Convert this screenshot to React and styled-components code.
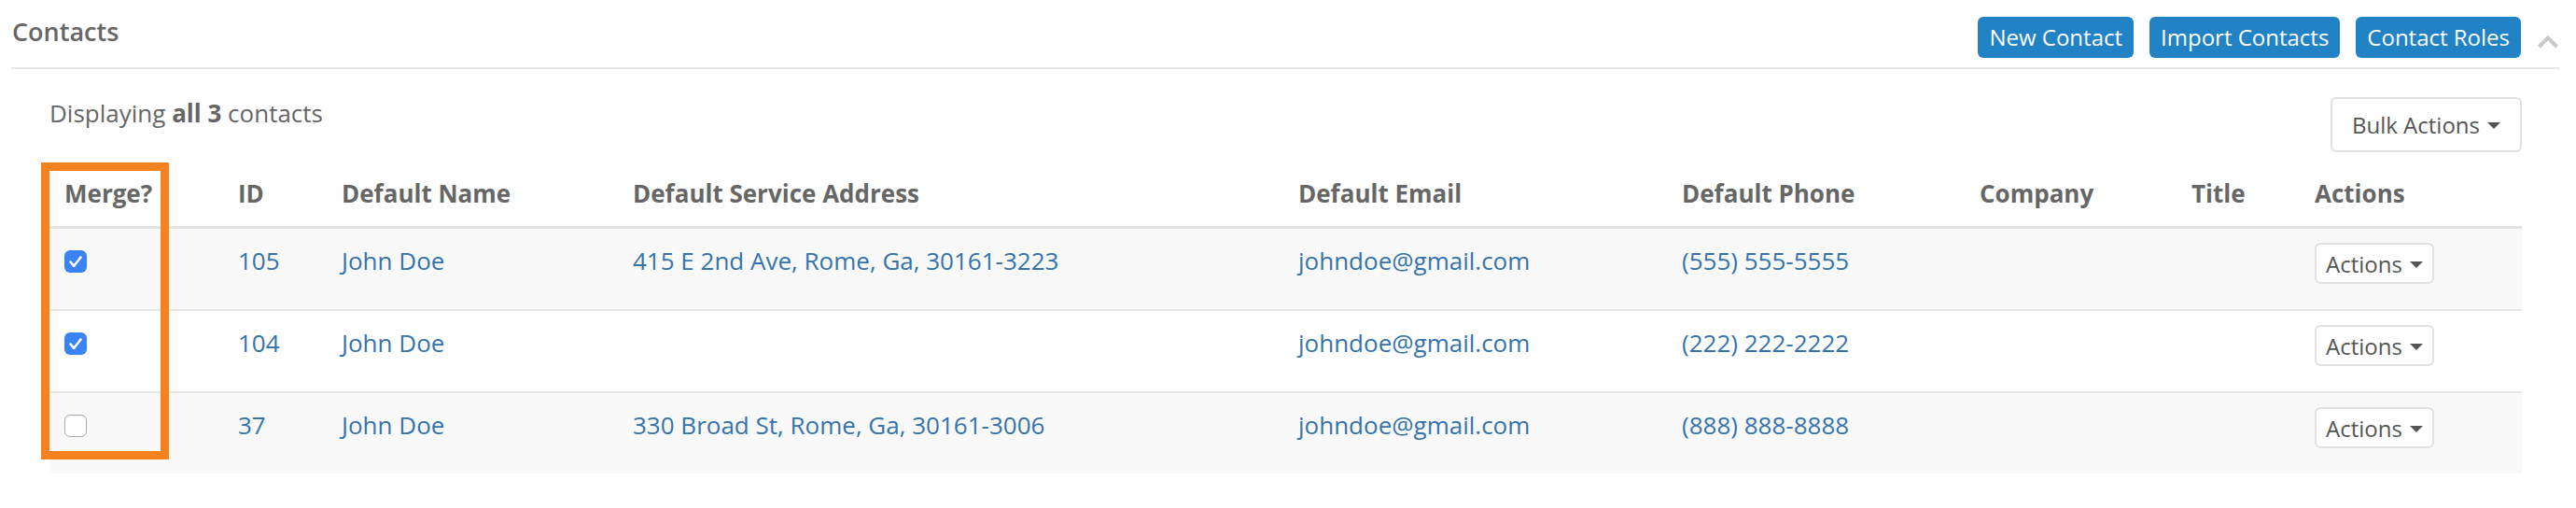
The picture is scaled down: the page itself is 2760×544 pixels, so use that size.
import React from 'react';
import styled, { createGlobalStyle } from 'styled-components';

const contacts = [
  {
    id: 105,
    name: 'John Doe',
    address: '415 E 2nd Ave, Rome, Ga, 30161-3223',
    email: 'johndoe@gmail.com',
    phone: '(555) 555-5555',
    merge: true,
  },
  {
    id: 104,
    name: 'John Doe',
    address: '',
    email: 'johndoe@gmail.com',
    phone: '(222) 222-2222',
    merge: true,
  },
  {
    id: 37,
    name: 'John Doe',
    address: '330 Broad St, Rome, Ga, 30161-3006',
    email: 'johndoe@gmail.com',
    phone: '(888) 888-8888',
    merge: false,
  },
];

const columns = [
  { label: 'Merge?', width: 186 },
  { label: 'ID', width: 111 },
  { label: 'Default Name', width: 312 },
  { label: 'Default Service Address', width: 713 },
  { label: 'Default Email', width: 411 },
  { label: 'Default Phone', width: 319 },
  { label: 'Company', width: 227 },
  { label: 'Title', width: 132 },
  { label: 'Actions', width: 238 },
];

function Checkbox({ checked }) {
  return (
    <CheckBox $checked={checked}>
      {checked && (
        <svg width="24" height="24" viewBox="0 0 24 24">
          <polyline
            points="6.5,12.5 10.3,16.8 17.5,7.5"
            fill="none"
            stroke="#fff"
            strokeWidth="2.6"
            strokeLinecap="round"
            strokeLinejoin="round"
          />
        </svg>
      )}
    </CheckBox>
  );
}

function ContactRow({ contact, striped, first }) {
  return (
    <Row $striped={striped}>
      <Td $first={first}>
        <Checkbox checked={contact.merge} />
      </Td>
      <Td $first={first}>
        <Link href="#">{contact.id}</Link>
      </Td>
      <Td $first={first}>
        <Link href="#">{contact.name}</Link>
      </Td>
      <Td $first={first}>
        <Link href="#">{contact.address}</Link>
      </Td>
      <Td $first={first}>
        <Link href="#">{contact.email}</Link>
      </Td>
      <Td $first={first}>
        <Link href="#">{contact.phone}</Link>
      </Td>
      <Td $first={first} />
      <Td $first={first} />
      <Td $first={first}>
        <DropdownButton $size="xs">
          Actions
          <Caret />
        </DropdownButton>
      </Td>
    </Row>
  );
}

export default function App() {
  return (
    <>
      <GlobalStyle />
      <Panel>
        <PanelHeader>
          <Title>Contacts</Title>
          <HeaderButtons>
            <PrimaryButton>New Contact</PrimaryButton>
            <PrimaryButton>Import Contacts</PrimaryButton>
            <PrimaryButton>Contact Roles</PrimaryButton>
          </HeaderButtons>
          <CollapseToggle>
            <svg width="24" height="15" viewBox="0 0 24 15">
              <polyline
                points="2.5,13 12,3.5 21.5,13"
                fill="none"
                stroke="#c9c9c9"
                strokeWidth="4"
              />
            </svg>
          </CollapseToggle>
        </PanelHeader>

        <PanelBody>
          <Toolbar>
            <Summary>
              Displaying <b>all 3</b> contacts
            </Summary>
            <DropdownButton $size="sm">
              Bulk Actions
              <Caret />
            </DropdownButton>
          </Toolbar>

          <TableWrap>
            <Table>
              <colgroup>
                {columns.map((col) => (
                  <col key={col.label} style={{ width: col.width }} />
                ))}
              </colgroup>
              <thead>
                <tr>
                  {columns.map((col) => (
                    <Th key={col.label}>{col.label}</Th>
                  ))}
                </tr>
              </thead>
              <tbody>
                {contacts.map((contact, i) => (
                  <ContactRow
                    key={contact.id}
                    contact={contact}
                    striped={i % 2 === 0}
                    first={i === 0}
                  />
                ))}
              </tbody>
            </Table>
            <Highlight />
          </TableWrap>
        </PanelBody>
      </Panel>
    </>
  );
}

const GlobalStyle = createGlobalStyle`
  html, body {
    margin: 0;
    padding: 0;
    background: #fff;
  }
  body {
    font-family: 'Open Sans', 'Liberation Sans', sans-serif;
    color: #666;
  }
`;

const Panel = styled.div`
  margin: 0 18px 0 12px;
`;

const PanelHeader = styled.div`
  display: flex;
  align-items: flex-start;
  height: 74px;
  box-sizing: border-box;
  padding-top: 14px;
  border-bottom: 2px solid #e7e7e7;
`;

const Title = styled.h2`
  flex: 1;
  margin: 0;
  padding-left: 1px;
  font-size: 27px;
  font-weight: 600;
  line-height: 40px;
  color: #666;
`;

const HeaderButtons = styled.div`
  display: flex;
  gap: 17px;
  margin-top: 4px;
`;

const PrimaryButton = styled.button`
  height: 44px;
  padding: 0 12px;
  border: none;
  border-radius: 6px;
  background: #2183c6;
  color: #fff;
  font-family: 'Open Sans', 'Liberation Sans', sans-serif;
  font-size: 24px;
  line-height: 44px;
  cursor: pointer;
`;

const CollapseToggle = styled.div`
  display: flex;
  width: 24px;
  height: 15px;
  margin: 23px 0 0 17px;
`;

const PanelBody = styled.div`
  padding: 24px 40px 0 41px;
`;

const Toolbar = styled.div`
  display: flex;
  justify-content: space-between;
  align-items: flex-start;
`;

const Summary = styled.div`
  margin-top: 3px;
  font-size: 26px;
  line-height: 40px;
  color: #666;

  b {
    font-weight: 700;
  }
`;

const DropdownButton = styled.button`
  display: inline-flex;
  align-items: center;
  height: ${({ $size }) => ($size === 'sm' ? '59px' : '44px')};
  margin-top: ${({ $size }) => ($size === 'sm' ? '6px' : '1px')};
  padding: 0 ${({ $size }) => ($size === 'sm' ? '21px' : '10px')};
  border: 2px solid #e1e1e1;
  border-radius: 6px;
  background: #fff;
  color: #555;
  font-family: 'Open Sans', 'Liberation Sans', sans-serif;
  font-size: 24px;
  cursor: pointer;
`;

const Caret = styled.span`
  display: inline-block;
  margin-left: 8px;
  margin-top: 2px;
  width: 0;
  height: 0;
  border-top: 7px solid #555;
  border-left: 7px solid transparent;
  border-right: 7px solid transparent;
`;

const TableWrap = styled.div`
  position: relative;
  margin-top: 8px;
`;

const Table = styled.table`
  width: 100%;
  table-layout: fixed;
  border-collapse: separate;
  border-spacing: 0;
`;

const Th = styled.th`
  padding: 16px 16px 15px;
  border-bottom: 3px solid #e2e2e2;
  text-align: left;
  font-size: 26px;
  font-weight: 700;
  line-height: 40px;
  color: #666;
  white-space: nowrap;
`;

const Row = styled.tr`
  background: ${({ $striped }) => ($striped ? '#f9f9f9' : '#fff')};
`;

const Td = styled.td`
  box-sizing: border-box;
  height: ${({ $first }) => ($first ? '86px' : '88px')};
  padding: 14px 16px 0;
  border-top: ${({ $first }) => ($first ? 'none' : '2px solid #e6e6e6')};
  vertical-align: top;
  font-size: 26px;
  line-height: 40px;
  white-space: nowrap;
`;

const Link = styled.a`
  color: #3573ad;
  text-decoration: none;
`;

const CheckBox = styled.span`
  display: block;
  box-sizing: border-box;
  width: 24px;
  height: 24px;
  margin-top: 9px;
  border-radius: 6px;
  background: ${({ $checked }) => ($checked ? '#3a83f6' : '#fff')};
  border: ${({ $checked }) => ($checked ? 'none' : '1.5px solid #ababab')};
  box-shadow: ${({ $checked }) =>
    $checked ? 'none' : 'inset 0 1px 1px rgba(0, 0, 0, 0.06)'};

  svg {
    display: block;
  }
`;

const Highlight = styled.div`
  position: absolute;
  left: -9px;
  top: 3px;
  width: 137px;
  height: 318px;
  box-sizing: border-box;
  border: 9px solid #f5821f;
  pointer-events: none;
`;
